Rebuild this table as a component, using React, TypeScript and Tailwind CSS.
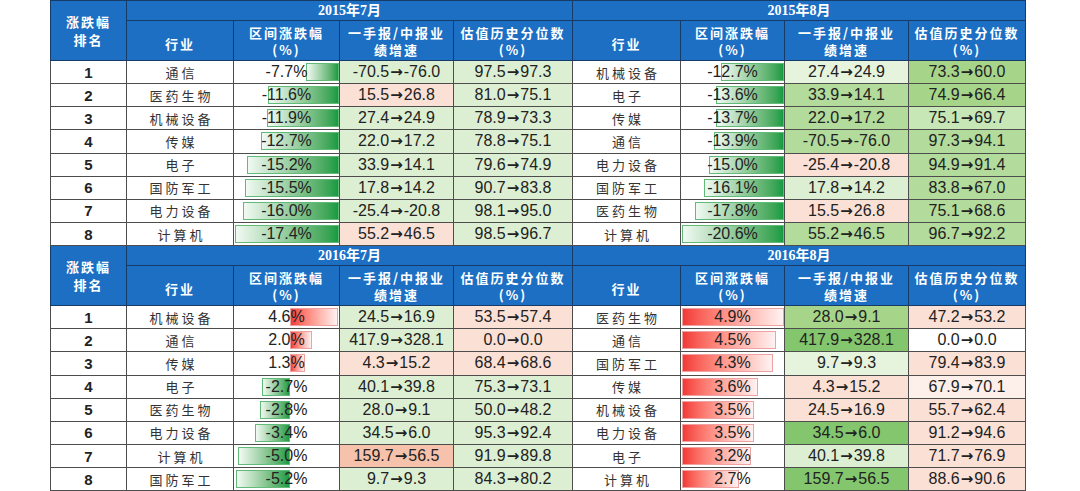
import React from "react";

type Bar = { v: string; l: number; w: number; red?: boolean };
type C = { t: string; bg: string };
type Row = { ind: string; bar: Bar; g: C; p: C };

const BG: Record<string, string> = {
  w: "bg-white",
  lg: "bg-[#ddefd2]",
  lg2: "bg-[#c8e7b6]",
  vlg: "bg-[#e6f4de]",
  mg: "bg-[#b3db9b]",
  mg2: "bg-[#a6d58a]",
  dg: "bg-[#84c66e]",
  lp: "bg-[#fbe0d6]",
  vlp: "bg-[#fdefe9]",
  sal: "bg-[#f6c2ab]",
};

const c = (t: string, bg: string): C => ({ t, bg });

const b2015a: Row[] = [
  { ind: "通信", bar: { v: "-7.7%", l: 72, w: 33 }, g: c("-70.5→-76.0", "lg"), p: c("97.5→97.3", "lg") },
  { ind: "医药生物", bar: { v: "-11.6%", l: 34, w: 71 }, g: c("15.5→26.8", "lp"), p: c("81.0→75.1", "lg") },
  { ind: "机械设备", bar: { v: "-11.9%", l: 33, w: 72 }, g: c("27.4→24.9", "lg"), p: c("78.9→73.3", "lg") },
  { ind: "传媒", bar: { v: "-12.7%", l: 27, w: 78 }, g: c("22.0→17.2", "lg"), p: c("78.8→75.1", "lg") },
  { ind: "电子", bar: { v: "-15.2%", l: 13, w: 92 }, g: c("33.9→14.1", "lg"), p: c("79.6→74.9", "lg") },
  { ind: "国防军工", bar: { v: "-15.5%", l: 11, w: 94 }, g: c("17.8→14.2", "lg"), p: c("90.7→83.8", "lg") },
  { ind: "电力设备", bar: { v: "-16.0%", l: 9, w: 96 }, g: c("-25.4→-20.8", "lg"), p: c("98.1→95.0", "lg") },
  { ind: "计算机", bar: { v: "-17.4%", l: 1, w: 104 }, g: c("55.2→46.5", "lp"), p: c("98.5→96.7", "lg") },
];

const b2015b: Row[] = [
  { ind: "机械设备", bar: { v: "-12.7%", l: 40, w: 63 }, g: c("27.4→24.9", "vlg"), p: c("73.3→60.0", "mg2") },
  { ind: "电子", bar: { v: "-13.6%", l: 35, w: 68 }, g: c("33.9→14.1", "mg"), p: c("74.9→66.4", "mg2") },
  { ind: "传媒", bar: { v: "-13.7%", l: 35, w: 68 }, g: c("22.0→17.2", "mg"), p: c("75.1→69.7", "lg2") },
  { ind: "通信", bar: { v: "-13.9%", l: 33, w: 70 }, g: c("-70.5→-76.0", "mg"), p: c("97.3→94.1", "mg") },
  { ind: "电力设备", bar: { v: "-15.0%", l: 28, w: 75 }, g: c("-25.4→-20.8", "lp"), p: c("94.9→91.4", "mg") },
  { ind: "国防军工", bar: { v: "-16.1%", l: 23, w: 80 }, g: c("17.8→14.2", "lg"), p: c("83.8→67.0", "mg") },
  { ind: "医药生物", bar: { v: "-17.8%", l: 14, w: 89 }, g: c("15.5→26.8", "lp"), p: c("75.1→68.6", "mg") },
  { ind: "计算机", bar: { v: "-20.6%", l: 1, w: 102 }, g: c("55.2→46.5", "mg"), p: c("96.7→92.2", "mg") },
];

const b2016a: Row[] = [
  { ind: "机械设备", bar: { v: "4.6%", l: 56, w: 48, red: true }, g: c("24.5→16.9", "lg"), p: c("53.5→57.4", "lp") },
  { ind: "通信", bar: { v: "2.0%", l: 56, w: 22, red: true }, g: c("417.9→328.1", "lg"), p: c("0.0→0.0", "lp") },
  { ind: "传媒", bar: { v: "1.3%", l: 56, w: 15, red: true }, g: c("4.3→15.2", "lp"), p: c("68.4→68.6", "lp") },
  { ind: "电子", bar: { v: "-2.7%", l: 28, w: 28 }, g: c("40.1→39.8", "lg"), p: c("75.3→73.1", "lg") },
  { ind: "医药生物", bar: { v: "-2.8%", l: 26, w: 30 }, g: c("28.0→9.1", "lg"), p: c("50.0→48.2", "lg") },
  { ind: "电力设备", bar: { v: "-3.4%", l: 21, w: 35 }, g: c("34.5→6.0", "lg"), p: c("95.3→92.4", "lg") },
  { ind: "计算机", bar: { v: "-5.0%", l: 4, w: 52 }, g: c("159.7→56.5", "sal"), p: c("91.9→89.8", "lg") },
  { ind: "国防军工", bar: { v: "-5.2%", l: 2, w: 54 }, g: c("9.7→9.3", "lg"), p: c("84.3→80.2", "lg") },
];

const b2016b: Row[] = [
  { ind: "医药生物", bar: { v: "4.9%", l: 1, w: 102, red: true }, g: c("28.0→9.1", "mg2"), p: c("47.2→53.2", "lp") },
  { ind: "通信", bar: { v: "4.5%", l: 1, w: 94, red: true }, g: c("417.9→328.1", "dg"), p: c("0.0→0.0", "w") },
  { ind: "国防军工", bar: { v: "4.3%", l: 1, w: 91, red: true }, g: c("9.7→9.3", "vlg"), p: c("79.4→83.9", "lp") },
  { ind: "传媒", bar: { v: "3.6%", l: 1, w: 76, red: true }, g: c("4.3→15.2", "lp"), p: c("67.9→70.1", "vlp") },
  { ind: "机械设备", bar: { v: "3.5%", l: 1, w: 72, red: true }, g: c("24.5→16.9", "lp"), p: c("55.7→62.4", "lp") },
  { ind: "电力设备", bar: { v: "3.5%", l: 1, w: 72, red: true }, g: c("34.5→6.0", "dg"), p: c("91.2→94.6", "lp") },
  { ind: "电子", bar: { v: "3.2%", l: 1, w: 69, red: true }, g: c("40.1→39.8", "lg"), p: c("71.7→76.9", "lp") },
  { ind: "计算机", bar: { v: "2.7%", l: 1, w: 57, red: true }, g: c("159.7→56.5", "dg"), p: c("88.6→90.6", "lp") },
];

const NUM = "font-['Liberation_Sans',Arial,sans-serif] text-[16px] text-[#222]";
const CJK = "font-['Noto_Sans_CJK_SC',sans-serif]";
const TD = "border border-[#4d4d4d] p-0 text-center align-middle";
const TH = "border border-[#173b66] bg-[#1c6fc3] text-white p-0 text-center align-middle";

function Num({ t }: { t: string }) {
  const parts = t.split("→");
  if (parts.length < 2) return <>{t}</>;
  return (
    <>
      {parts[0]}
      <span className="font-['DejaVu_Sans',sans-serif] text-[15px] font-bold mx-[1px]">→</span>
      {parts[1]}
    </>
  );
}

function BarCell({ b }: { b: Bar }) {
  return (
    <td className={TD + " bg-white"}>
      <div className="relative h-[22px] flex items-center justify-center">
        <div
          className={
            b.red
              ? "absolute top-[2px] bottom-[2px] bg-linear-to-r from-[#f13737] to-[#fff2f2] border border-[#efa2a2]"
              : "absolute top-[2px] bottom-[2px] bg-linear-to-r from-[#f1faf3] to-[#129b43] border border-[#62ba78]"
          }
          style={{ left: b.l, width: b.w }}
        />
        <span className={"relative leading-none " + NUM}>{b.v}</span>
      </div>
    </td>
  );
}

function ValCell({ v }: { v: C }) {
  return (
    <td className={TD + " " + BG[v.bg] + " " + NUM + " leading-none"}>
      <Num t={v.t} />
    </td>
  );
}

function IndCell({ t }: { t: string }) {
  return (
    <td className={TD + " bg-white " + CJK + " text-[13px] tracking-[3px] text-[#333] leading-none"}>
      <span className="pl-[3px]">{t}</span>
    </td>
  );
}

function Block({ m1, m2, a, b }: { m1: string; m2: string; a: Row[]; b: Row[] }) {
  const sub = "font-bold text-[13px] tracking-[2px] leading-[17px] " + CJK;
  return (
    <>
      <tr className="h-[20px]">
        <th rowSpan={2} className={TH + " font-bold text-[13px] tracking-[2px] leading-[18px] " + CJK}>
          涨跌幅
          <br />
          排名
        </th>
        <th colSpan={4} className={TH + " font-bold text-[14px] leading-none font-['Liberation_Serif','Noto_Sans_CJK_SC',serif]"}>
          {m1}
        </th>
        <th colSpan={4} className={TH + " font-bold text-[14px] leading-none font-['Liberation_Serif','Noto_Sans_CJK_SC',serif]"}>
          {m2}
        </th>
      </tr>
      <tr className="h-[40px]">
        {[0, 1].map((k) => (
          <React.Fragment key={k}>
            <th className={TH + " " + sub + " pt-[6px]"}>行业</th>
            <th className={TH + " " + sub}>
              区间涨跌幅
              <br />
              (%)
            </th>
            <th className={TH + " " + sub + " tracking-[1px]"}>
              一手报/中报业
              <br />
              绩增速
            </th>
            <th className={TH + " " + sub + " tracking-[1px]"}>
              估值历史分位数
              <br />
              (%)
            </th>
          </React.Fragment>
        ))}
      </tr>
      {a.map((r, i) => (
        <tr key={i} className="h-[23.15px]">
          <td className={TD + " bg-white font-bold text-[15px] font-['Liberation_Sans',Arial,sans-serif] text-[#222] leading-none"}>
            {i + 1}
          </td>
          <IndCell t={r.ind} />
          <BarCell b={r.bar} />
          <ValCell v={r.g} />
          <ValCell v={r.p} />
          <IndCell t={b[i].ind} />
          <BarCell b={b[i].bar} />
          <ValCell v={b[i].g} />
          <ValCell v={b[i].p} />
        </tr>
      ))}
    </>
  );
}

export default function App() {
  const widths = ["w-[76px]", "w-[107px]", "w-[106px]", "w-[114px]", "w-[119px]", "w-[108px]", "w-[104px]", "w-[124px]", "w-[117px]"];
  return (
    <div className="w-[1080px] h-[491px] bg-white overflow-hidden">
      <table className="table-fixed border-collapse ml-[50px] w-[975px]">
        <colgroup>
          {widths.map((w, i) => (
            <col key={i} className={w} />
          ))}
        </colgroup>
        <tbody>
          <Block m1="2015年7月" m2="2015年8月" a={b2015a} b={b2015b} />
          <Block m1="2016年7月" m2="2016年8月" a={b2016a} b={b2016b} />
        </tbody>
      </table>
    </div>
  );
}
